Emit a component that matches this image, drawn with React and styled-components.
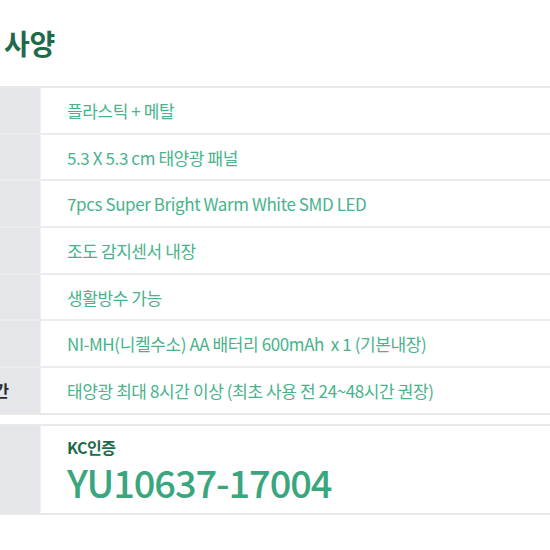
import React from 'react';
import styled, { createGlobalStyle } from 'styled-components';

const GlobalStyle = createGlobalStyle`
  html, body {
    margin: 0;
    padding: 0;
    background: #ffffff;
    overflow: hidden;
  }
  body {
    font-family: "Noto Sans CJK KR", "Noto Sans", sans-serif;
  }
`;

const Page = styled.div`
  width: 550px;
  height: 550px;
  overflow: hidden;
`;

const Title = styled.h2`
  margin: 0;
  padding: 26px 0 0 4px;
  font-size: 28px;
  line-height: 34px;
  font-weight: 700;
  color: #1f6a4b;
  letter-spacing: -0.3px;
`;

/* the spec table is wider than the view; its label column is mostly cut off on the left */
const Table = styled.div`
  margin: ${({ $top }) => $top}px 0 0 -160px;
  width: 710px;
  border-top: 2px solid #e9e9e9;
  border-bottom: 2px solid #e9e9e9;
`;

const Row = styled.div`
  display: grid;
  grid-template-columns: 201px 1fr;
  height: ${({ $h }) => $h}px;
  box-sizing: border-box;
  border-bottom: ${({ $last }) => ($last ? 'none' : '2px solid #ececec')};
`;

const Label = styled.div`
  display: flex;
  align-items: center;
  padding-left: 110px;
  background: #e4e6e9;
  border-right: 1px solid #eef0f2;
  font-size: 16px;
  font-weight: 700;
  color: #2a2a2a;
  white-space: nowrap;
`;

const Value = styled.div`
  display: flex;
  flex-direction: column;
  justify-content: ${({ $top }) => ($top ? 'flex-start' : 'center')};
  padding: ${({ $top }) => ($top ? '10px 0 0 26px' : '0 0 0 26px')};
  font-size: 17px;
  color: #48b38b;
  white-space: nowrap;
  letter-spacing: -0.4px;
`;

const CertName = styled.div`
  font-size: 16px;
  font-weight: 700;
  color: #1f6a4b;
  line-height: 22px;
  letter-spacing: -0.5px;
`;

const CertNumber = styled.div`
  margin-top: 2px;
  font-size: 38px;
  font-weight: 500;
  line-height: 44px;
  color: #3aa67e;
  letter-spacing: -1.1px;
`;

const specs = [
  ['재질', '플라스틱 + 메탈'],
  ['패널', '5.3 X 5.3 cm 태양광 패널'],
  ['광원', '7pcs Super Bright Warm White SMD LED'],
  ['센서', '조도 감지센서 내장'],
  ['방수', '생활방수 가능'],
  ['배터리', 'NI-MH(니켈수소) AA 배터리 600mAh\u00a0 x 1 (기본내장)'],
  ['충전시간', '태양광 최대 8시간 이상 (최초 사용 전 24~48시간 권장)'],
];

export default function App() {
  return (
    <Page>
      <GlobalStyle />
      <Title>사양</Title>
      <Table $top={26}>
        {specs.map(([label, value], i) => (
          <Row key={label} $h={i === specs.length - 1 ? 44.7 : 46.7} $last={i === specs.length - 1}>
            <Label>{label}</Label>
            <Value>{value}</Value>
          </Row>
        ))}
      </Table>
      <Table $top={9}>
        <Row $h={87} $last>
          <Label>인증</Label>
          <Value $top>
            <CertName>KC인증</CertName>
            <CertNumber>YU10637-17004</CertNumber>
          </Value>
        </Row>
      </Table>
    </Page>
  );
}
